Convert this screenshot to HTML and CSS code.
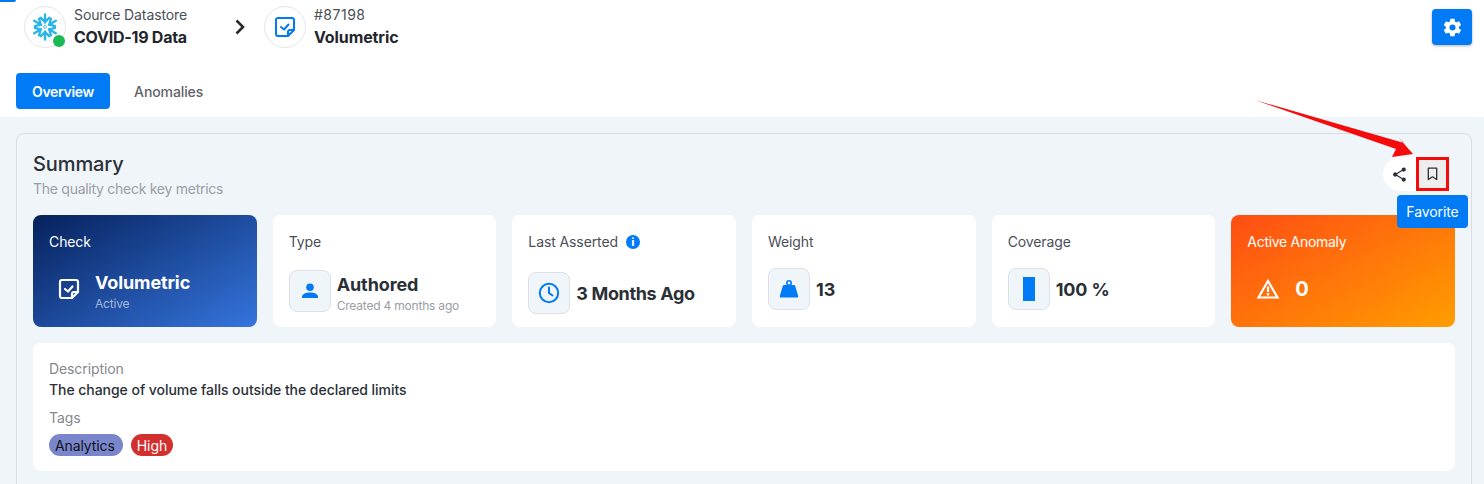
FILE: index.html
```html
<!DOCTYPE html>
<html lang="en">
<head>
<meta charset="utf-8">
<title>Volumetric</title>
<link rel="stylesheet" href="styles.css">
</head>
<body>
<div class="corner"></div>
<header class="top">
  <div class="crumbs">
    <div class="round">
      <svg width="30" height="30" viewBox="0 0 30 30" fill="none" stroke="#29b5e8" stroke-width="2.400" stroke-linecap="round" stroke-linejoin="round">
        <defs><path id="arm" d="M15 2.500v8M10.800 5.800l4.200 4.200 4.200-4.200"/></defs>
        <use href="#arm"/>
        <use href="#arm" transform="rotate(60 15 15)"/>
        <use href="#arm" transform="rotate(120 15 15)"/>
        <use href="#arm" transform="rotate(180 15 15)"/>
        <use href="#arm" transform="rotate(240 15 15)"/>
        <use href="#arm" transform="rotate(300 15 15)"/>
        <path d="M15 13.300 16.700 15 15 16.700 13.300 15z" stroke-width="1"/>
      </svg>
      <span class="dot"></span>
    </div>
    <div class="crumb-text">
      <span class="crumb-sub">Source Datastore</span>
      <strong class="crumb-main crumb-tight">COVID-19 Data</strong>
    </div>
    <svg class="chev" width="12" height="16" viewBox="0 0 12 16" fill="none" stroke="#2b2b2b" stroke-width="2.600"><path d="M2.500 1.500 9 8l-6.500 6.500"/></svg>
    <div class="round round-b">
      <svg width="22" height="22" viewBox="0 0 22 22" fill="none" stroke="#007bf5" stroke-width="2" stroke-linejoin="round" stroke-linecap="round">
        <path d="M4 2h14a2 2 0 0 1 2 2v10l-6 6H4a2 2 0 0 1-2-2V4a2 2 0 0 1 2-2z"/>
        <path d="M20 14h-4a2 2 0 0 0-2 2v4"/>
        <path d="m7 11 3 2.500 4.500-5"/>
      </svg>
    </div>
    <div class="crumb-text">
      <span class="crumb-sub crumb-id">#87198</span>
      <strong class="crumb-main">Volumetric</strong>
    </div>
  </div>
  <button class="gear" aria-label="Settings">
    <svg width="21" height="21" viewBox="0 0 24 24" fill="#fff"><path d="M19.400 13c.04-.33.060-.66.060-1s-.020-.67-.060-1l2.100-1.650a.5.5 0 0 0 .12-.64l-2-3.460a.5.500 0 0 0-.61-.22l-2.490 1a7.300 7.300 0 0 0-1.730-1l-.38-2.650A.5.500 0 0 0 13.920 2h-4a.5.500 0 0 0-.49.42L9.050 5.070c-.62.250-1.200.590-1.730 1l-2.490-1a.5.500 0 0 0-.61.22l-2 3.460a.5.500 0 0 0 .12.640L4.440 11a7.900 7.900 0 0 0 0 2l-2.100 1.650a.5.500 0 0 0-.12.640l2 3.460c.12.220.39.300.61.220l2.490-1c.53.410 1.110.750 1.730 1l.38 2.650c.04.240.25.420.49.420h4c.24 0 .45-.18.49-.42l.38-2.650c.62-.25 1.200-.59 1.730-1l2.490 1c.22.080.49 0 .61-.22l2-3.460a.5.500 0 0 0-.12-.64zM12 15.500a3.500 3.500 0 1 1 0-7 3.500 3.500 0 0 1 0 7z"/></svg>
  </button>
</header>
<nav class="tabs">
  <span class="tab tab-on">Overview</span>
  <span class="tab">Anomalies</span>
</nav>
<main class="page">
  <section class="panel">
    <div class="panel-head">
      <div>
        <h2 class="title">Summary</h2>
        <p class="subtitle">The quality check key metrics</p>
      </div>
      <div class="actions">
        <span class="act">
          <svg width="17" height="17" viewBox="0 0 24 24" fill="#2b2f36"><path d="M18 16.100c-.8 0-1.500.3-2 .8L8.900 12.700c.1-.2.100-.5.100-.7s0-.5-.1-.7L16 7.200c.5.500 1.200.8 2 .8a3 3 0 1 0-3-3c0 .2 0 .5.100.7L8 9.800A3 3 0 1 0 8 14.200l7.100 4.200c-.1.200-.1.400-.1.600a3 3 0 1 0 3-2.900z"/></svg>
        </span>
        <span class="act act-fav">
          <svg width="14" height="14" viewBox="0 0 14 14" fill="none" stroke="#2b2f36" stroke-width="1.300" stroke-linejoin="round"><path d="M2.300 1.200h8.400v11.300L6.500 9.800l-4.200 2.700z"/></svg>
        </span>
        <span class="tooltip">Favorite</span>
      </div>
    </div>
    <div class="cards">
      <article class="card card-check">
        <div class="label">Check</div>
        <div class="row row-check">
          <svg class="check-ic" width="22" height="22" viewBox="0 0 22 22" fill="none" stroke="#fff" stroke-width="2.200" stroke-linejoin="round" stroke-linecap="round">
            <path d="M4 2h14a2 2 0 0 1 2 2v10l-6 6H4a2 2 0 0 1-2-2V4a2 2 0 0 1 2-2z"/>
            <path d="M20 14h-4a2 2 0 0 0-2 2v4"/>
            <path d="m7 11 3 2.500 4.500-5"/>
          </svg>
          <div class="stack">
            <div class="value">Volumetric</div>
            <div class="meta meta-light">Active</div>
          </div>
        </div>
      </article>
      <article class="card">
        <div class="label">Type</div>
        <div class="row">
          <span class="box"><svg width="20" height="20" viewBox="0 0 20 20" fill="#007bf5"><circle cx="10" cy="6.300" r="3.800"/><path d="M2 17v-1.300C2 13 6 11.500 10 11.500s8 1.500 8 4.200V17z"/></svg></span>
          <div class="stack">
            <div class="value">Authored</div>
            <div class="meta">Created 4 months ago</div>
          </div>
        </div>
      </article>
      <article class="card">
        <div class="label">Last Asserted <span class="info">i</span></div>
        <div class="row row-low">
          <span class="box"><svg width="22" height="22" viewBox="0 0 22 22" fill="none" stroke="#007bf5" stroke-width="2" stroke-linecap="round"><circle cx="11" cy="11" r="9.200"/><path d="M11 5.500V11l3.500 2.500"/></svg></span>
          <div class="value value-tight">3 Months Ago</div>
        </div>
      </article>
      <article class="card">
        <div class="label">Weight</div>
        <div class="row">
          <span class="box"><svg width="20" height="18" viewBox="0 0 20 18" fill="#007bf5"><circle cx="10" cy="3" r="2.200" fill="none" stroke="#007bf5" stroke-width="1.600"/><path d="M5 5h10c.6 0 1 .3 1.200.9l3 10c.2.800-.3 1.600-1.200 1.600H2c-.9 0-1.400-.8-1.200-1.600l3-10c.2-.6.600-.9 1.200-.9z"/></svg></span>
          <div class="value">13</div>
        </div>
      </article>
      <article class="card">
        <div class="label">Coverage</div>
        <div class="row">
          <span class="box"><span class="bar"></span></span>
          <div class="value">100 %</div>
        </div>
      </article>
      <article class="card card-anom">
        <div class="label">Active Anomaly</div>
        <div class="row row-anom">
          <svg width="24" height="22" viewBox="0 0 24 22" fill="none" stroke="#fff" stroke-width="2.200" stroke-linejoin="miter"><path d="M12 3 21.500 19.500H2.500z"/><path d="M12 8.500v5.500M12 15v2.500"/></svg>
          <div class="value">0</div>
        </div>
      </article>
    </div>
    <div class="desc">
      <div class="desc-label">Description</div>
      <div class="desc-text">The change of volume falls outside the declared limits</div>
      <div class="desc-label desc-tags">Tags</div>
      <div class="tags">
        <span class="tag tag-a">Analytics</span>
        <span class="tag tag-h">High</span>
      </div>
    </div>
  </section>
</main>
<svg class="arrow" width="160" height="60" viewBox="0 0 160 60"><path d="M0 0 149 43 143 37 158 54 137 57 141 49z" fill="#f40b0b"/></svg>
</body>
</html>
```
FILE: styles.css
```css
* { box-sizing: border-box; }
html, body { margin: 0; height: 484px; overflow: hidden; }
body { background: #fff; font-family: "Inter", "Noto Sans", sans-serif; color: #2b2f36; position: relative; letter-spacing: -0.1px; }
.corner { position: absolute; left: 0; top: 0; width: 16px; height: 2px; background: #007bf5; border-radius: 0 0 2px 0; }
.top { height: 73px; display: flex; justify-content: space-between; align-items: flex-start; padding: 6px 12px 0 24px; }
.crumbs { display: flex; align-items: center; height: 42px; }
.round { width: 42px; height: 42px; border: 1px solid #e3e6ea; border-radius: 50%; display: flex; align-items: center; justify-content: center; position: relative; flex: none; }
.round-b { margin-right: 8px; }
.dot { position: absolute; right: 0; bottom: 0; width: 12px; height: 12px; border-radius: 50%; background: #1db954; }
.crumb-text { display: flex; flex-direction: column; margin: 1px 0 0 8px; width: 113px; white-space: nowrap; }
.round-b + .crumb-text { margin-left: 0; }
.crumb-sub { font-size: 14px; line-height: 18px; color: #4a4f57; }
.crumb-id { letter-spacing: 0.5px; }
.crumb-main { font-size: 16px; line-height: 24px; font-weight: 700; color: #22262c; margin-top: 1px; }
.crumb-tight { letter-spacing: -0.25px; }
.chev { margin: 0 18px 0 47px; }
.gear { margin-top: 3px; width: 40px; height: 36px; border: 0; border-radius: 4px; background: #007bf5; box-shadow: 0 1px 3px rgba(0,0,0,.3); display: flex; align-items: center; justify-content: center; padding: 0; }
.tabs { height: 44px; padding-left: 16px; display: flex; align-items: flex-start; gap: 8px; }
.tab { height: 36px; display: flex; align-items: center; padding: 0 16px; font-size: 14px; font-weight: 500; color: #5f6368; border-radius: 4px; }
.tab-on { background: #007bf5; color: #fff; font-weight: 600; letter-spacing: -0.3px; }
.page { background: #f0f5fa; height: 367px; padding: 16px 12px 0 16px; overflow: hidden; }
.panel { border: 1px solid #d9dde3; border-radius: 8px; height: 400px; padding: 16px 16px 0 16px; }
.panel-head { display: flex; justify-content: space-between; height: 65px; }
.title { margin: 0; font-size: 20px; line-height: 28px; font-weight: 500; color: #2b2f36; }
.subtitle { margin: 1px 0 0; font-size: 14px; line-height: 20px; color: #9a9ea6; letter-spacing: -0.27px; }
.actions { position: relative; display: flex; align-items: center; height: 34px; margin: 7px 6px 0 0; background: #fff; border-radius: 17px 0 0 17px; }
.act { width: 33px; height: 34px; display: flex; align-items: center; justify-content: center; }
.act-fav { background: #eee; border: 3px solid #f40b0b; }
.tooltip { position: absolute; left: 14px; top: 38px; width: 71px; height: 33px; background: #007bf5; color: #fff; border-radius: 4px; font-size: 14px; display: flex; align-items: center; justify-content: center; z-index: 2; }
.cards { display: grid; grid-template-columns: repeat(6, 1fr); gap: 16px; height: 112px; }
.card { background: #fff; border-radius: 8px; padding: 17px 16px 0; }
.card-check { background: linear-gradient(150deg, #06215c 0%, #3575dd 100%); color: #fff; }
.card-anom { background: linear-gradient(150deg, #ff4d14 0%, #ff9d00 100%); color: #fff; }
.label { font-size: 14px; line-height: 20px; color: #4a4f57; display: flex; align-items: center; }
.card-check .label, .card-anom .label { color: #fff; }
.card-anom .label { letter-spacing: -0.3px; }
.info { width: 14px; height: 14px; border-radius: 50%; background: #007bf5; color: #fff; font-size: 10px; font-weight: 800; margin-left: 8px; display: flex; align-items: center; justify-content: center; }
.row { display: flex; align-items: center; gap: 6px; margin-top: 16px; }
.row-low { margin-top: 20px; }
.row-check { margin: 16px 0 0 9px; gap: 15px; height: 42px; }
.row-anom { margin: 17px 0 0 9px; gap: 15px; height: 40px; }
.stack { padding-top: 4px; }
.stack .value { line-height: 26px; }
.box { width: 42px; height: 42px; flex: none; background: #f0f5fa; border: 1px solid #dde1e7; border-radius: 8px; display: flex; align-items: center; justify-content: center; }
.bar { width: 12px; height: 24px; background: #007bf5; }
.value { font-size: 18px; line-height: 25px; font-weight: 700; color: #2b2f36; }
.value-tight { letter-spacing: -0.35px; }
.card-check .value, .card-anom .value { color: #fff; }
.card-anom .value { font-size: 20px; }
.meta { font-size: 12px; line-height: 16px; color: #9a9ea6; letter-spacing: -0.2px; }
.meta-light { color: #a3b8dd; }
.desc { background: #fff; border-radius: 8px; margin-top: 16px; height: 128px; padding: 17px 16px 0; }
.desc-label { font-size: 14px; line-height: 18px; color: #85888e; }
.desc-text { font-size: 14px; line-height: 20px; font-weight: 500; color: #2b2f36; margin-top: 2px; letter-spacing: -0.05px; }
.desc-tags { margin-top: 9px; }
.tags { display: flex; gap: 8px; margin-top: 6px; padding-top: 1px; }
.tag { height: 22px; padding: 0 8px 0 6px; border-radius: 11px; font-size: 14px; display: flex; align-items: center; }
.tag-a { background: #7986cb; color: #10131a; }
.tag-h { background: #d32f2f; color: #fff; padding: 0 6px; }
.arrow { position: absolute; left: 1255px; top: 100px; z-index: 3; }
```
